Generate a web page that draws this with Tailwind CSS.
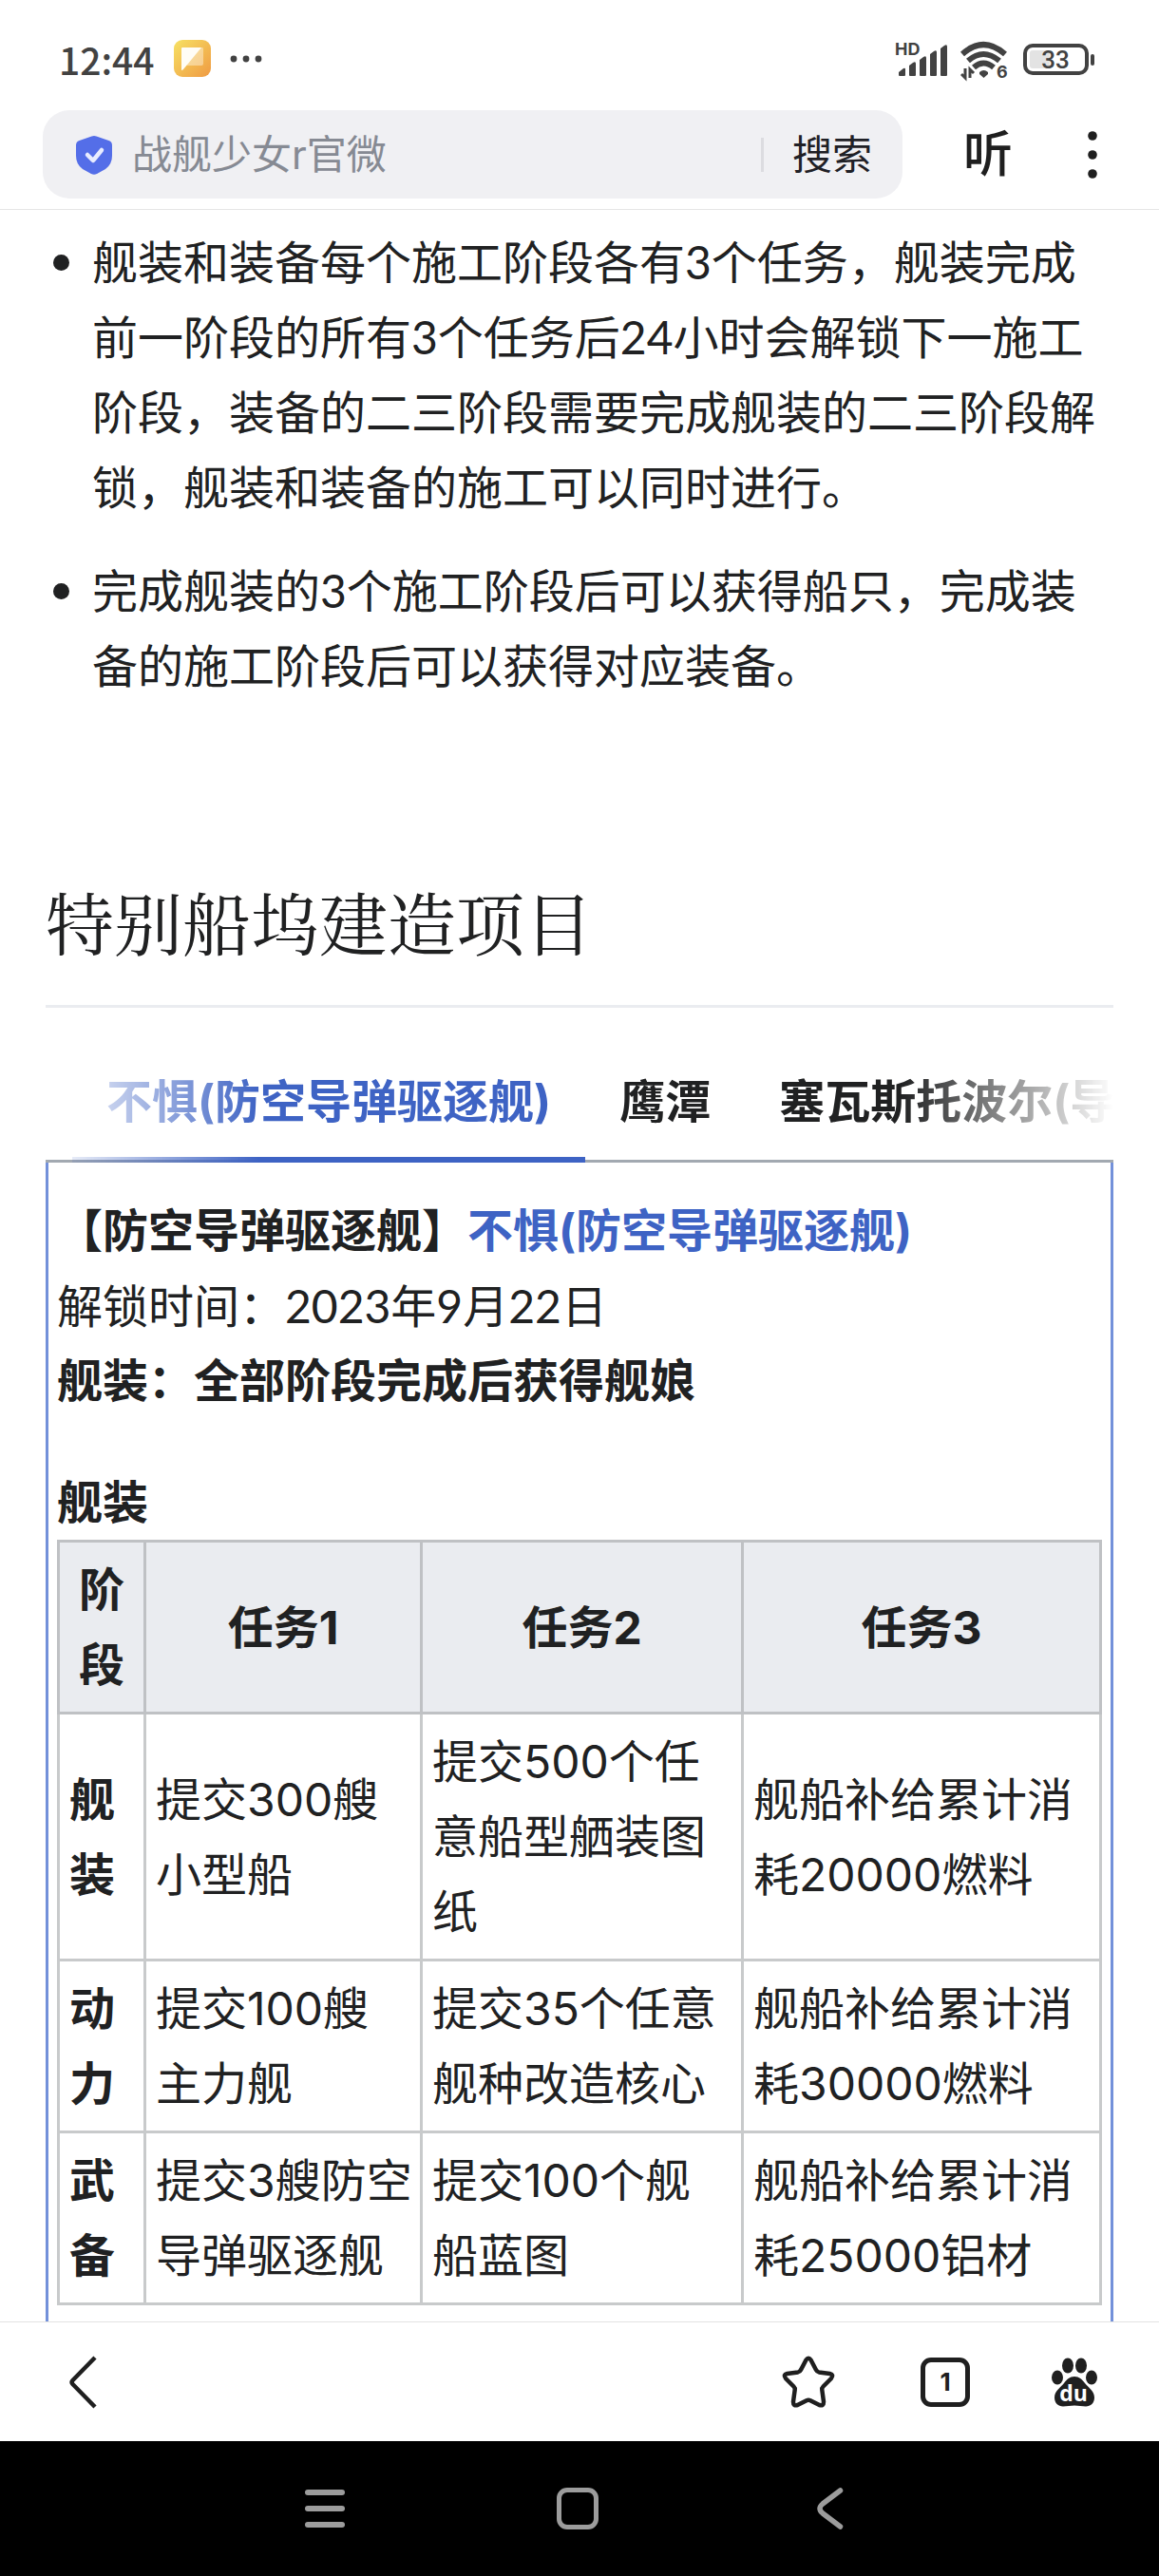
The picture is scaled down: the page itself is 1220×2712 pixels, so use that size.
<!DOCTYPE html>
<html lang="zh-CN">
<head>
  <meta charset="UTF-8" />
  <meta name="viewport" content="width=device-width, initial-scale=1" />
  <title>特别船坞建造项目</title>
  <script src="https://cdn.jsdelivr.net/npm/@tailwindcss/browser@4"></script>
</head>
<body class="bg-white text-[#202122] font-['Inter','Noto_Sans_CJK_SC',sans-serif] h-screen flex flex-col overflow-hidden">

  <!-- Status bar -->
  <div class="flex items-center justify-between h-[116px] pl-[62px] pr-[67px] pt-[7px] text-[#424242] shrink-0">
    <div class="flex items-center">
      <span class="text-[39px] leading-[48px] font-medium font-['Noto_Sans_CJK_SC',sans-serif]">12:44</span>
      <svg class="w-[39px] h-[39px] ml-5" viewBox="0 0 39 39" aria-hidden="true">
        <defs>
          <linearGradient id="appBg" x1="0" y1="0" x2="1" y2="1">
            <stop offset="0" stop-color="#f7e163" />
            <stop offset="1" stop-color="#ef9a43" />
          </linearGradient>
        </defs>
        <rect width="39" height="39" rx="9" fill="url(#appBg)" />
        <path d="M10 8h20q1 0 1 1v16q0 2-2 2H14z" fill="#fff" fill-opacity=".4" />
        <path d="M9 8h20L10 31q-2 2-2 0V9q0-1 1-1z" fill="#fffdf6" />
      </svg>
      <svg class="w-[34px] h-2 ml-5" viewBox="0 0 34 8" fill="currentColor" aria-hidden="true">
        <circle cx="4" cy="4" r="3.4" /><circle cx="17" cy="4" r="3.4" /><circle cx="30" cy="4" r="3.4" />
      </svg>
    </div>

    <div class="flex items-center gap-3.5">
      <!-- Signal -->
      <svg class="w-14 h-12" viewBox="-2 -4 56 48" fill="currentColor" aria-label="HD">
        <text x="-1" y="16" font-size="18" font-weight="700" font-family="Inter">HD</text>
        <path d="M3 37v-3l5-4q2-1 2 1v6q0 1-1 1H4q-1 0-1-1zM14 37V27l4-3q3-2 3 1v12q0 1-1 1h-5q-1 0-1-1zM25 37V21l4-3q3-2 3 1v18q0 1-1 1h-5q-1 0-1-1zM36 37V15l4-3q3-2 3 1v24q0 1-1 1h-5q-1 0-1-1zM47 37V9l4-3q3-2 3 1v30q0 1-1 1h-5q-1 0-1-1z" />
      </svg>
      <!-- Wi-Fi -->
      <svg class="w-[52px] h-14" viewBox="0 -8 52 56" fill="none" stroke="currentColor" aria-hidden="true">
        <path d="M2 15Q24 -5 47 15" stroke-width="6" />
        <path d="M8 22Q24 8 41 22" stroke-width="6" />
        <path d="M14 29Q24 20 35 29" stroke-width="6" />
        <path d="M20 34q4.500-4 9 0v2l-4.500 4-4.500-4z" fill="currentColor" stroke="none" />
        <path d="M5 30v10l-4-4M10 40V31l4 4" stroke-width="3" />
        <text x="38" y="40" font-size="18" font-weight="700" font-family="Inter" fill="currentColor" stroke="none">6</text>
      </svg>
      <!-- Battery -->
      <svg class="w-[76px] h-11" viewBox="0 -4 76 44" fill="none" aria-label="33%">
        <rect x="2" y="4" width="65" height="29" rx="8" stroke="currentColor" stroke-width="4" />
        <rect x="7" y="9" width="21" height="19" rx="3" fill="#e3e3e3" />
        <rect x="71" y="13" width="4" height="12" rx="2" fill="currentColor" />
        <text x="34" y="28" text-anchor="middle" font-size="26" font-weight="500" font-family="Roboto" fill="currentColor">33</text>
      </svg>
    </div>
  </div>

  <!-- Search header -->
  <header class="flex items-center pl-[45px] pr-[46px] pb-[11px] border-b border-[#e5e5e5] shrink-0">
    <form class="flex flex-1 items-center h-[93px] rounded-[28px] bg-[#f0f0f3] pl-[34px] pr-8">
      <svg class="w-10 h-[42px] shrink-0" viewBox="0 0 40 42" aria-hidden="true">
        <path d="M17.500 1.500q2.500-1 5 0l13 4.500q3.500 1.200 3.500 5v11q0 9-7 14l-9 5q-3 1.500-6 0l-9-5q-7-5-7-14V11q0-3.800 3.500-5z" fill="#546ee8" />
        <path d="M13 21l6 6 9-11" fill="none" stroke="#e8ecff" stroke-width="4.500" stroke-linecap="round" stroke-linejoin="round" />
      </svg>
      <input type="text" aria-label="搜索" placeholder="战舰少女r官微"
        class="flex-1 min-w-0 ml-5 text-[42px] leading-[60px] placeholder:text-[#868a93] focus:outline-none" />
      <span class="w-[3px] h-9 bg-[#dcdce0] mr-[30px]"></span>
      <button type="submit" class="text-[42px] leading-[60px] text-[#1f2026]">搜索</button>
    </form>
    <button class="ml-16 text-[52px] leading-[60px] font-medium text-[#1f1f1f]">听</button>
    <button aria-label="更多" class="ml-[60px] w-12 h-[60px] flex items-center justify-center">
      <svg class="w-3 h-[52px]" viewBox="0 0 12 52" fill="#1f1f1f" aria-hidden="true">
        <circle cx="6" cy="6" r="4.800" /><circle cx="6" cy="26" r="4.800" /><circle cx="6" cy="46" r="4.800" />
      </svg>
    </button>
  </header>

  <!-- Article -->
  <main class="flex-1 min-h-0 overflow-hidden flex flex-col px-12 text-[48px] leading-[79px]">
    <ul class="pl-2 pt-[15px] flex flex-col gap-[30px] font-['Lato','Noto_Sans_CJK_SC',sans-serif]">
      <li class="flex gap-6">
        <span class="w-[17px] h-[17px] rounded-full bg-[#202122] mt-8 shrink-0"></span>
        <p>舰装和装备每个施工阶段各有3个任务，舰装完成前一阶段的所有3个任务后24小时会解锁下一施工阶段，装备的二三阶段需要完成舰装的二三阶段解锁，舰装和装备的施工可以同时进行。</p>
      </li>
      <li class="flex gap-6">
        <span class="w-[17px] h-[17px] rounded-full bg-[#202122] mt-8 shrink-0"></span>
        <p>完成舰装的3个施工阶段后可以获得船只，完成装备的施工阶段后可以获得对应装备。</p>
      </li>
    </ul>

    <h2 class="mt-[175px] pb-[35px] border-b-[3px] border-[#eaecf0] text-[72px] leading-[108px] font-normal font-['Noto_Serif_CJK_SC','Noto_Sans_CJK_SC',serif]">特别船坞建造项目</h2>

    <!-- Tabs -->
    <div class="mt-[54px] border-b-[3px] border-[#a2a9b1]">
      <div role="tablist" class="flex pl-7 -mb-[3px] overflow-hidden whitespace-nowrap font-bold [mask-image:linear-gradient(to_right,transparent,black_224px,black_calc(100%-224px),transparent)]">
        <button role="tab" aria-selected="true" class="shrink-0 px-9 pt-[5px] pb-[19px] border-b-[6px] border-[#3e63c4] text-[#3e63c4]">不惧(防空导弹驱逐舰)</button>
        <button role="tab" aria-selected="false" class="shrink-0 px-9 pt-[5px] pb-[25px]">鹰潭</button>
        <button role="tab" aria-selected="false" class="shrink-0 px-9 pt-[5px] pb-[25px]">塞瓦斯托波尔(导弹战列舰)</button>
      </div>
    </div>

    <section class="flex-1 border-x-[3px] border-[#7391da] px-[9px] pt-8">
      <p><b>【防空导弹驱逐舰】<a href="#" class="text-[#3e63c4]">不惧(防空导弹驱逐舰)</a></b></p>
      <p class="font-['Lato','Noto_Sans_CJK_SC',sans-serif]">解锁时间：2023年9月22日</p>
      <p class="font-bold">舰装：全部阶段完成后获得舰娘</p>

      <table class="w-full table-fixed border-collapse mt-[49px]">
        <caption class="text-left font-bold">舰装</caption>
        <colgroup>
          <col class="w-[91px]" />
          <col class="w-[291px]" />
          <col class="w-[338px]" />
          <col />
        </colgroup>
        <thead class="bg-[#eaecf0]">
          <tr>
            <th class="border-[3px] border-[#bfc1c4] p-2.5">阶段</th>
            <th class="border-[3px] border-[#bfc1c4] p-2.5">任务1</th>
            <th class="border-[3px] border-[#bfc1c4] p-2.5">任务2</th>
            <th class="border-[3px] border-[#bfc1c4] p-2.5">任务3</th>
          </tr>
        </thead>
        <tbody>
          <tr>
            <th class="border-[3px] border-[#c8cacb] py-2.5 pl-2.5 pr-1.5 text-left">舰装</th>
            <td class="border-[3px] border-[#c8cacb] py-2.5 pl-2.5 pr-1.5">提交300艘<br />小型船</td>
            <td class="border-[3px] border-[#c8cacb] py-2.5 pl-2.5 pr-1.5">提交500个任意船型舾装图纸</td>
            <td class="border-[3px] border-[#c8cacb] py-2.5 pl-2.5 pr-1.5">舰船补给累计消耗20000燃料</td>
          </tr>
          <tr>
            <th class="border-[3px] border-[#c8cacb] py-2.5 pl-2.5 pr-1.5 text-left">动力</th>
            <td class="border-[3px] border-[#c8cacb] py-2.5 pl-2.5 pr-1.5">提交100艘<br />主力舰</td>
            <td class="border-[3px] border-[#c8cacb] py-2.5 pl-2.5 pr-1.5">提交35个任意舰种改造核心</td>
            <td class="border-[3px] border-[#c8cacb] py-2.5 pl-2.5 pr-1.5">舰船补给累计消耗30000燃料</td>
          </tr>
          <tr>
            <th class="border-[3px] border-[#c8cacb] py-2.5 pl-2.5 pr-1.5 text-left">武备</th>
            <td class="border-[3px] border-[#c8cacb] py-2.5 pl-2.5 pr-1.5">提交3艘防空导弹驱逐舰</td>
            <td class="border-[3px] border-[#c8cacb] py-2.5 pl-2.5 pr-1.5">提交100个舰<br />船蓝图</td>
            <td class="border-[3px] border-[#c8cacb] py-2.5 pl-2.5 pr-1.5">舰船补给累计消耗25000铝材</td>
          </tr>
        </tbody>
      </table>
    </section>
  </main>

  <!-- Browser toolbar -->
  <footer class="flex items-center justify-between h-[126px] border-t border-[#e2e2e2] pl-[55px] pr-[65px] text-[#1f1f1f] shrink-0">
    <button aria-label="返回" class="w-16 h-16 flex items-center justify-center">
      <svg class="w-[30px] h-[56px]" viewBox="0 0 30 56" fill="none" stroke="currentColor" stroke-width="4.500" aria-hidden="true">
        <path d="M28 2L4.500 26q-2 2 0 4L28 54" />
      </svg>
    </button>
    <div class="flex items-center gap-20">
      <button aria-label="收藏" class="w-16 h-16 flex items-center justify-center">
        <svg class="w-14 h-14" viewBox="0 0 56 56" fill="none" stroke="currentColor" stroke-width="4.500" stroke-linejoin="round" aria-hidden="true">
          <path d="M25.500 4.500Q28 1 30.500 4.500L36 15Q37 17 39 17.400L50.500 19Q55 20 52 24L43.500 32.500Q42 34 42.300 36L44 48.500Q44 53.500 39.500 52L30 47.200Q28 46.300 26 47.200L16.500 52Q12 53.500 12 48.500L13.700 36Q14 34 12.500 32.500L4 24Q1 20 5.500 19L17 17.400Q19 17 20 15Z" />
        </svg>
      </button>
      <button aria-label="标签页" class="w-16 h-16 flex items-center justify-center">
        <span class="w-[52px] h-[52px] rounded-[11px] border-[5px] border-current flex items-center justify-center text-[26px] leading-none font-bold">1</span>
      </button>
      <button aria-label="百度" class="w-12 h-16 flex items-center justify-center">
        <svg class="w-12 h-[52px]" viewBox="0 0 48 52" fill="currentColor" aria-hidden="true">
          <ellipse cx="17" cy="8.500" rx="6" ry="8" />
          <ellipse cx="31" cy="8.500" rx="6" ry="8" />
          <ellipse cx="6" cy="21" rx="6" ry="7.500" />
          <ellipse cx="42" cy="21" rx="6" ry="7.500" />
          <path d="M24 20c5 0 8 3 11 7s10 8 10 15c0 6-4 9.500-9 9.500-4 0-8-1-12-1s-8 1-12 1c-5 0-9-3.500-9-9.500 0-7 7-11 10-15s6-7 11-7z" />
          <text x="23" y="46" text-anchor="middle" font-size="23" font-weight="700" font-family="Open Sans" fill="#fff">du</text>
        </svg>
      </button>
    </div>
  </footer>

  <!-- System navigation -->
  <nav class="flex items-center justify-center gap-[202px] h-[142px] pr-1 bg-black text-[#9c9c9c] shrink-0">
    <button aria-label="最近任务" class="w-16 h-16 flex items-center justify-center">
      <svg class="w-[42px] h-10" viewBox="0 0 42 40" fill="currentColor" aria-hidden="true">
        <rect width="42" height="6" rx="3" /><rect y="17" width="42" height="6" rx="3" /><rect y="34" width="42" height="6" rx="3" />
      </svg>
    </button>
    <button aria-label="主屏幕" class="w-16 h-16 flex items-center justify-center">
      <span class="w-11 h-11 rounded-[11px] border-[5px] border-current"></span>
    </button>
    <button aria-label="返回" class="w-16 h-16 flex items-center justify-center">
      <svg class="w-7 h-11" viewBox="0 0 28 44" fill="none" stroke="currentColor" stroke-width="5.500" stroke-linecap="round" aria-hidden="true">
        <path d="M24.500 3L6 17q-6 5 0 10l18.500 14" />
      </svg>
    </button>
  </nav>
</body>
</html>
